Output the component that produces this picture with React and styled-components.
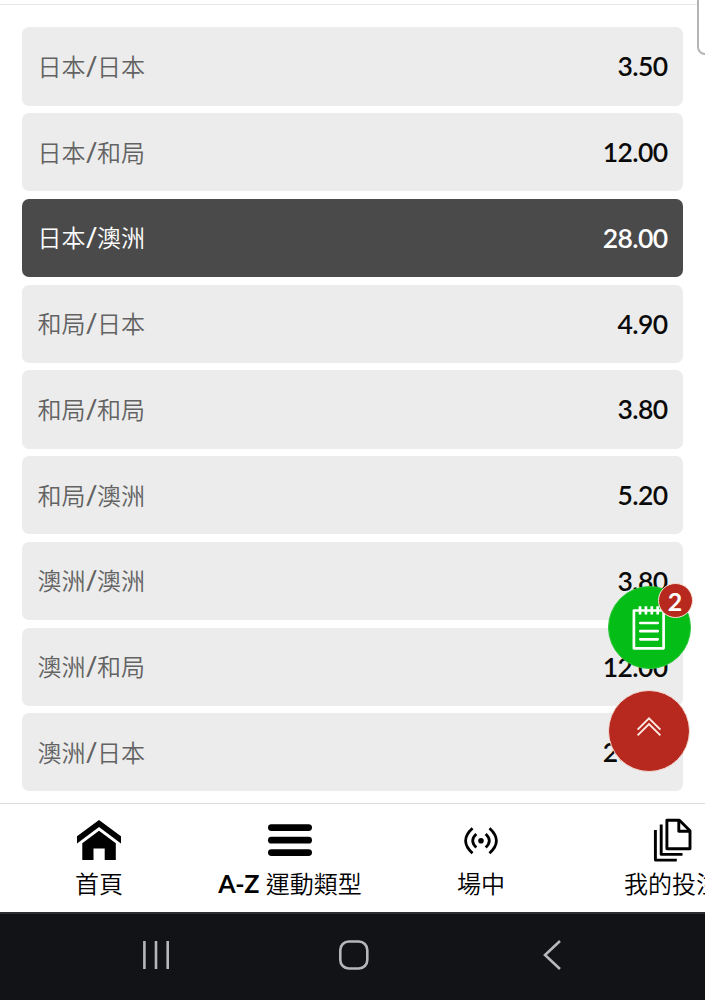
import React from "react";
import styled, { createGlobalStyle } from "styled-components";

const GlobalStyle = createGlobalStyle`
  * {
    box-sizing: border-box;
  }
  body {
    margin: 0;
    background: #fff;
    font-family: Lato, "Noto Sans CJK TC", sans-serif;
  }
`

const Screen = styled.div`
  position: relative;
  display: flex;
  flex-direction: column;
  width: 705px;
  height: 1000px;
  overflow: hidden;
  background: #fff;
`

const Market = styled.main`
  flex: 1;
  min-height: 0;
  margin-top: 4px;
  padding: 22.4px 22px 0;
  border-top: 1px solid #e9e9e9;
`

const OddsList = styled.div`
  display: grid;
  grid-auto-rows: 78.2px;
  row-gap: 7.55px;
`

const OddsRow = styled.div`
  display: flex;
  align-items: center;
  justify-content: space-between;
  padding: 0 15.5px;
  border-radius: 7px;
  background: ${({ $picked }) => ($picked ? "#4a4a4a" : "#ececec")};
  color: ${({ $picked }) => ($picked ? "#fff" : "#0a0a0a")};
`

const Selection = styled.span`
  padding-top: 1px;
  font-size: 24px;
  font-weight: 350;
  line-height: 36px;
  color: ${({ $picked }) => ($picked ? "#fff" : "#636363")};
`

const Slash = styled.span`
  font-size: 26px;
  font-weight: 600;
  line-height: 1;
  letter-spacing: -0.5px;
`

const Price = styled.span`
  font-size: 26.5px;
  font-weight: 600;
  letter-spacing: -0.6px;
  line-height: 36px;
`

const SidePanel = styled.div`
  position: absolute;
  top: -20px;
  right: -20px;
  width: 28px;
  height: 75px;
  border: 2px solid #b4b4b4;
  border-radius: 8px;
  background: #fff;
`

const Floating = styled.div`
  position: absolute;
  top: 586.4px;
  left: 607.5px;
  display: flex;
  flex-direction: column;
  align-items: center;
  gap: 21px;
`

const RoundButton = styled.button`
  position: relative;
  display: flex;
  align-items: center;
  justify-content: center;
  width: ${({ $size }) => $size}px;
  height: ${({ $size }) => $size}px;
  padding: 0;
  border: 1px solid ${({ $edge }) => $edge};
  border-radius: 50%;
  background: ${({ $color }) => $color};
`

const Badge = styled.span`
  position: absolute;
  top: -4px;
  right: -3px;
  width: 35px;
  height: 35px;
  border: 1.5px solid #f7e3d6;
  border-radius: 50%;
  background: #b7281e;
  color: #fff;
  font: 700 25px/34px Lato, sans-serif;
  text-align: center;
`

const TabBar = styled.nav`
  display: grid;
  grid-template-columns: repeat(4, 191px);
  flex: none;
  height: 109px;
  padding-left: 3.5px;
  border-top: 1px solid #dcdcdc;
  background: #fff;
`

const Tab = styled.a`
  display: flex;
  flex-direction: column;
  align-items: center;
  padding-top: 12px;
  color: #000;
  font-size: 24px;
  font-weight: 350;
  line-height: 36px;
  white-space: nowrap;

  svg {
    margin-bottom: 2px;
  }
`

const Latin = styled.span`
  font-weight: 700;
  font-size: 25px;
  letter-spacing: -0.3px;
  line-height: 1;
`

const SystemBar = styled.footer`
  display: grid;
  grid-template-columns: repeat(3, 198px);
  justify-content: center;
  align-items: center;
  justify-items: center;
  flex: none;
  height: 88px;
  padding: 0 0 4px 2px;
  border-top: 2px solid #2c2d31;
  background: #121317;
`

const odds = [
  ["日本", "日本", "3.50"],
  ["日本", "和局", "12.00"],
  ["日本", "澳洲", "28.00", true],
  ["和局", "日本", "4.90"],
  ["和局", "和局", "3.80"],
  ["和局", "澳洲", "5.20"],
  ["澳洲", "澳洲", "3.80"],
  ["澳洲", "和局", "12.00"],
  ["澳洲", "日本", "26.00"],
]

const HomeIcon = () => (
  <svg width="48" height="48" viewBox="0 0 48 48">
    <path d="M24 4 46 20.3V27.5L24 11 2 27.5V20.3Z" />
    <path d="M24 14.8 40.8 27.3V44H29.7V32.5H18.5V44H7.3V27.3Z" />
  </svg>
)

const MenuIcon = () => (
  <svg width="48" height="48" viewBox="0 0 48 48">
    <rect x="2" y="8.2" width="44" height="6.8" rx="3.4" />
    <rect x="2" y="20.8" width="44" height="6.8" rx="3.4" />
    <rect x="2" y="33.2" width="44" height="6.8" rx="3.4" />
  </svg>
)

const LiveIcon = () => (
  <svg width="48" height="48" viewBox="0 0 48 48" fill="none" stroke="#000" strokeWidth="2.8">
    <circle cx="24" cy="24.7" r="2.8" fill="#000" stroke="none" />
    <path d="M19.3 18Q12.1 24.7 19.3 31.4M28.7 18Q35.9 24.7 28.7 31.4" />
    <path d="M15.5 12.2Q1.7 24.7 15.5 37.2M32.5 12.2Q46.3 24.7 32.5 37.2" />
  </svg>
)

const BetsIcon = () => (
  <svg width="48" height="48" viewBox="0 0 48 48" fill="none" stroke="#000" strokeWidth="2.9" strokeLinejoin="round">
    <path d="M18.9 4.2H31.4L42 14.8V32.8H18.9Z" />
    <path d="M30.8 4.5V15.2H41.7" />
    <path d="M13.2 8.5V38.4H34.5M7.4 14V44.1H28.8" />
  </svg>
)

const SlipIcon = () => (
  <svg width="36" height="46" viewBox="0 0 36 46" fill="none" stroke="#fff" strokeWidth="2.7">
    <path d="M2.9 5.5H32.6V43.3H2.9Z" strokeLinejoin="round" />
    <path d="M9 1.3V9.5M14.9 1.3V9.5M20.8 1.3V9.5M26.7 1.3V9.5" />
    <path d="M9.3 18H26.7M9.3 26.2H26.7M9.3 34.3H26.7" strokeLinecap="round" />
  </svg>
)

const TopIcon = () => (
  <svg width="26" height="32" viewBox="0 0 26 32" fill="none" stroke="#ffeae2" strokeWidth="1.9">
    <path d="M1.6 14.6 13 3.3 24.4 14.6M1.6 20.4 13 9.1 24.4 20.4" />
  </svg>
)

export default function App() {
  return (
    <>
      <GlobalStyle />
      <Screen>
        <Market>
          <OddsList>
            {odds.map(([half, full, price, picked]) => (
              <OddsRow key={half + full} $picked={picked}>
                <Selection $picked={picked}>{half}<Slash>/</Slash>{full}</Selection>
                <Price>{price}</Price>
              </OddsRow>
            ))}
          </OddsList>
        </Market>
        <TabBar>
          <Tab><HomeIcon />首頁</Tab>
          <Tab><MenuIcon /><span><Latin>A-Z</Latin> 運動類型</span></Tab>
          <Tab><LiveIcon />場中</Tab>
          <Tab><BetsIcon />我的投注</Tab>
        </TabBar>
        <SystemBar>
          <svg width="32" height="32" viewBox="0 0 32 32" fill="none" stroke="#b6b7ba" strokeWidth="2.6">
            <path d="M4.4 2V30M16 2V30M27.7 2V30" />
          </svg>
          <svg width="32" height="32" viewBox="0 0 32 32" fill="none" stroke="#b6b7ba" strokeWidth="2.6">
            <rect x="2.3" y="2.5" width="27" height="27" rx="8.5" />
          </svg>
          <svg width="32" height="32" viewBox="0 0 32 32" fill="none" stroke="#b6b7ba" strokeWidth="2.6">
            <path d="M24 2 9 16 24 30" />
          </svg>
        </SystemBar>
        <SidePanel />
        <Floating>
          <RoundButton $size={83} $color="#04bd17" $edge="#2cc63a">
            <SlipIcon />
            <Badge>2</Badge>
          </RoundButton>
          <RoundButton $size={82} $color="#b7281e" $edge="#f3dcd4">
            <TopIcon />
          </RoundButton>
        </Floating>
      </Screen>
    </>
  );
}
